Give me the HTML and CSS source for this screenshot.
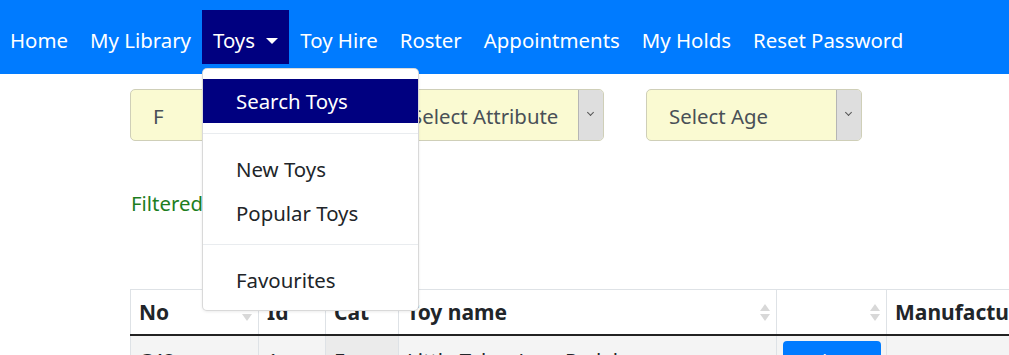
FILE: index.html
```html
<!DOCTYPE html>
<html lang="en">
<head>
    <meta charset="UTF-8">
    <meta name="viewport" content="width=device-width, initial-scale=1.0">
    <title>Toys</title>
    <link rel="stylesheet" href="styles.css">
</head>
<body>
    <nav class="navbar">
        <a href="#" class="nav-link">Home</a>
        <a href="#" class="nav-link">My Library</a>
        <div class="nav-dropdown">
            <a href="#" class="nav-link active">Toys <span class="caret"></span></a>
            <div class="dropdown-menu">
                <a href="#" class="dropdown-item selected">Search Toys</a>
                <div class="dropdown-divider"></div>
                <a href="#" class="dropdown-item">New Toys</a>
                <a href="#" class="dropdown-item">Popular Toys</a>
                <div class="dropdown-divider second"></div>
                <a href="#" class="dropdown-item">Favourites</a>
            </div>
        </div>
        <a href="#" class="nav-link">Toy Hire</a>
        <a href="#" class="nav-link">Roster</a>
        <a href="#" class="nav-link">Appointments</a>
        <a href="#" class="nav-link">My Holds</a>
        <a href="#" class="nav-link">Reset Password</a>
    </nav>

    <div class="container">
        <div class="filters">
            <div class="filter-box"><span>F</span></div>
            <div class="filter-box select"><span>Select Attribute</span><span class="arrow"></span></div>
            <div class="filter-box select"><span>Select Age</span><span class="arrow"></span></div>
        </div>

        <p class="filtered">Filtered</p>

        <table class="toy-table">
            <thead>
                <tr>
                    <th class="col-no">No <span class="sort down"></span></th>
                    <th class="col-id">Id <span class="sort-mark"></span></th>
                    <th class="col-cat">Cat <span class="sort-mark"></span></th>
                    <th class="col-name">Toy name <span class="sort both"></span></th>
                    <th class="col-btn"><span class="sort both"></span></th>
                    <th class="col-man">Manufacturer</th>
                </tr>
            </thead>
            <tbody>
                <tr>
                    <td>C42</td>
                    <td>1</td>
                    <td class="sorted">F</td>
                    <td>Little Tykes Jeep Pedal</td>
                    <td><button class="btn">View</button></td>
                    <td></td>
                </tr>
            </tbody>
        </table>
    </div>
</body>
</html>
```

FILE: styles.css
```css
body {
    margin: 0;
    font-family: "Noto Sans", "Open Sans", sans-serif;
    font-size: 20.4px;
    color: #212529;
    background-color: #ffffff;
    overflow: hidden;
}
.navbar {
    display: flex;
    align-items: center;
    background-color: #007bff;
    height: 74px;
}
.nav-link {
    color: #ffffff;
    text-decoration: none;
    padding: 15px 11px 9px;
    line-height: 30px;
    white-space: nowrap;
    display: block;
}
.navbar > .nav-link:first-child {
    padding-left: 10px;
}
.nav-link.active {
    background-color: #000080;
}
.caret {
    display: inline-block;
    margin-left: 6px;
    vertical-align: 4px;
    border-top: 6px solid #ffffff;
    border-left: 6px solid transparent;
    border-right: 6px solid transparent;
}
.nav-dropdown {
    position: relative;
}
.dropdown-menu {
    position: absolute;
    top: 58px;
    left: 0;
    width: 215px;
    background-color: #ffffff;
    border: 1px solid rgba(0, 0, 0, 0.15);
    border-radius: 5px;
    padding: 10px 0 8px;
    box-shadow: 0 1px 3px rgba(0, 0, 0, 0.08);
    z-index: 10;
}
.dropdown-item {
    display: block;
    color: #212529;
    text-decoration: none;
    padding: 0 0 0 33px;
    line-height: 44px;
}
.dropdown-item.selected {
    background-color: #000080;
    color: #ffffff;
}
.dropdown-divider {
    border-top: 1px solid #e9ecef;
    margin: 10px 0 13px;
}
.dropdown-divider.second {
    margin: 9px 0 13px;
}
.container {
    padding: 15px 0 0 130px;
}
.filters {
    display: flex;
    gap: 42px;
}
.filter-box {
    display: flex;
    align-items: center;
    justify-content: space-between;
    width: 216px;
    height: 52px;
    box-sizing: border-box;
    background-color: #fafad2;
    border: 1px solid #cfcfb8;
    border-radius: 5px;
    padding-left: 22px;
    color: #495057;
}
.filter-box > span:first-child {
    padding-top: 2px;
}
.arrow {
    width: 24px;
    height: 50px;
    background-color: #dedede;
    border-left: 1px solid #b5b5b5;
    border-radius: 0 4px 4px 0;
    position: relative;
}
.arrow::after {
    content: "";
    position: absolute;
    left: 9px;
    top: 20px;
    width: 4px;
    height: 4px;
    border-right: 1px solid #555;
    border-bottom: 1px solid #555;
    transform: rotate(45deg);
}
.filtered {
    color: #1e7e1e;
    margin: 48px 0 0 1px;
    line-height: 28px;
}
.toy-table {
    margin-top: 72px;
    border-collapse: collapse;
    border-top: 1px solid #dee2e6;
    border-left: 1px solid #dee2e6;
    width: 1000px;
    table-layout: fixed;
}
.toy-table th,
.toy-table td {
    border-left: 1px solid #dee2e6;
    text-align: left;
    white-space: nowrap;
    overflow: hidden;
}
.toy-table th {
    position: relative;
    font-size: 21px;
    font-weight: 700;
    padding: 6px 8px;
    height: 32px;
    border-bottom: 2px solid #222;
}
.toy-table td {
    padding: 3px 8px 5px;
    background-color: #f4f4f4;
    height: 30px;
}
.toy-table td.sorted {
    background-color: #ebebeb;
}
.col-no { width: 111px; }
.col-id { width: 50px; }
.col-cat { width: 56px; }
.col-name { width: 361px; }
.col-btn { width: 93px; }
.col-man { width: 300px; }
.sort {
    position: absolute;
    right: 6px;
    top: 13px;
    width: 10px;
    height: 20px;
}
.sort.down::after,
.sort.both::after {
    content: "";
    position: absolute;
    left: 0;
    top: 11px;
    border-top: 7px solid #d8d8d8;
    border-left: 5px solid transparent;
    border-right: 5px solid transparent;
}
.sort.both::before {
    content: "";
    position: absolute;
    left: 0;
    top: 1px;
    border-bottom: 7px solid #d8d8d8;
    border-left: 5px solid transparent;
    border-right: 5px solid transparent;
}
.sort-mark {
    position: absolute;
    right: 8px;
    top: 10px;
    width: 8px;
    height: 2px;
    background-color: #8080d8;
}
.btn {
    display: block;
    width: 98px;
    height: 40px;
    margin: 2px 0 0 -2px;
    background-color: #007bff;
    color: #ffffff;
    border: none;
    border-radius: 4px;
    font: inherit;
}
```
